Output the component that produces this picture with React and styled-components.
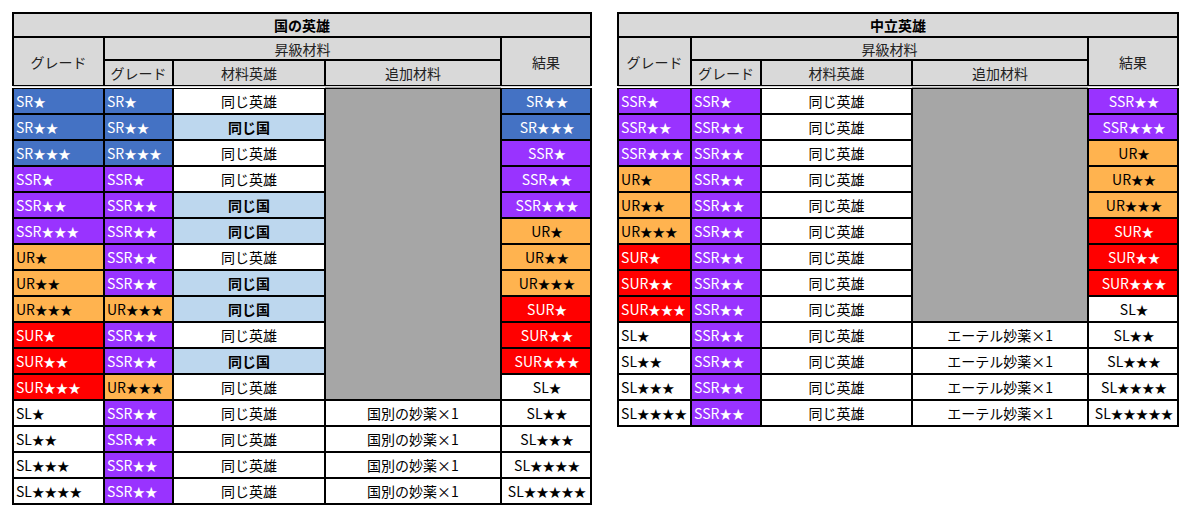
import React from "react";
import styled, { createGlobalStyle } from "styled-components";

const GlobalStyle = createGlobalStyle`
  html, body {
    margin: 0;
    padding: 0;
    background: #fff;
  }
  body {
    font-family: "Noto Sans CJK JP", "Noto Sans", sans-serif;
    font-size: 14px;
    color: #000;
  }
`;

const GRADE_COLORS = {
  SR: { bg: "#4472c4", fg: "#fff" },
  SSR: { bg: "#9933ff", fg: "#fff" },
  UR: { bg: "#ffb34f", fg: "#000" },
  SUR: { bg: "#ff0000", fg: "#fff" },
  SL: { bg: "#fff", fg: "#000" },
};

const gradeOf = (label) => label.replace(/★/g, "");

const Page = styled.div`
  display: flex;
  align-items: flex-start;
  gap: 25px;
  padding: 12px 0 0 12px;
`;

const Sheet = styled.table`
  border-collapse: collapse;
  table-layout: fixed;
  border: 2px solid #000;
  width: ${(p) => p.$width}px;
`;

const TitleCell = styled.th`
  background: #d9d9d9;
  border: 2px solid #000;
  height: 22px;
  padding: 0;
  font-weight: bold;
  font-size: 14px;
  text-align: center;
`;

const HeadCell = styled.th`
  background: #d9d9d9;
  border: 2px solid #000;
  border-bottom: ${(p) => (p.$last ? "4px double #000" : "2px solid #000")};
  height: ${(p) => p.$h}px;
  padding: 0;
  font-weight: normal;
  font-size: 14px;
  color: #222;
  text-align: center;
`;

const GradeCell = styled.td`
  background: ${(p) => GRADE_COLORS[p.$grade].bg};
  color: ${(p) => GRADE_COLORS[p.$grade].fg};
  border: 2px solid #000;
  height: 24px;
  padding: 0 0 0 2px;
  text-align: ${(p) => (p.$center ? "center" : "left")};
  white-space: nowrap;
  overflow: hidden;
`;

const Stars = styled.span`
  font-size: 12.5px;
`;

const MaterialCell = styled.td`
  background: ${(p) => (p.$country ? "#bdd7ee" : "#fff")};
  font-weight: ${(p) => (p.$country ? "bold" : "normal")};
  border: 2px solid #000;
  padding: 0;
  text-align: center;
`;

const ExtraCell = styled.td`
  background: ${(p) => (p.$empty ? "#a6a6a6" : "#fff")};
  border: 2px solid #000;
  padding: 0;
  text-align: center;
  white-space: nowrap;
`;

const Grade = ({ label, center }) => {
  const name = gradeOf(label);
  return (
    <GradeCell $grade={name} $center={center}>
      {name}
      <Stars>{label.slice(name.length)}</Stars>
    </GradeCell>
  );
};

function UpgradeTable({ title, widths, rows, grayRows, extraLabel }) {
  const total = widths.reduce((a, b) => a + b, 0);
  return (
    <Sheet $width={total}>
      <colgroup>
        {widths.map((w, i) => (
          <col key={i} style={{ width: w }} />
        ))}
      </colgroup>
      <thead>
        <tr>
          <TitleCell colSpan={5}>{title}</TitleCell>
        </tr>
        <tr>
          <HeadCell rowSpan={2} $h={21} $last>
            グレード
          </HeadCell>
          <HeadCell colSpan={3} $h={21}>
            昇級材料
          </HeadCell>
          <HeadCell rowSpan={2} $h={21} $last>
            結果
          </HeadCell>
        </tr>
        <tr>
          <HeadCell $h={24} $last>
            グレード
          </HeadCell>
          <HeadCell $h={24} $last>
            材料英雄
          </HeadCell>
          <HeadCell $h={24} $last>
            追加材料
          </HeadCell>
        </tr>
      </thead>
      <tbody>
        {rows.map(([from, material, country, result], i) => (
          <tr key={i}>
            <Grade label={from} />
            <Grade label={material} />
            <MaterialCell $country={country}>
              {country ? "同じ国" : "同じ英雄"}
            </MaterialCell>
            {i === 0 && <ExtraCell $empty rowSpan={grayRows} />}
            {i >= grayRows && <ExtraCell>{extraLabel}</ExtraCell>}
            <Grade label={result} center />
          </tr>
        ))}
      </tbody>
    </Sheet>
  );
}

const countryRows = [
  ["SR★", "SR★", false, "SR★★"],
  ["SR★★", "SR★★", true, "SR★★★"],
  ["SR★★★", "SR★★★", false, "SSR★"],
  ["SSR★", "SSR★", false, "SSR★★"],
  ["SSR★★", "SSR★★", true, "SSR★★★"],
  ["SSR★★★", "SSR★★", true, "UR★"],
  ["UR★", "SSR★★", false, "UR★★"],
  ["UR★★", "SSR★★", true, "UR★★★"],
  ["UR★★★", "UR★★★", true, "SUR★"],
  ["SUR★", "SSR★★", false, "SUR★★"],
  ["SUR★★", "SSR★★", true, "SUR★★★"],
  ["SUR★★★", "UR★★★", false, "SL★"],
  ["SL★", "SSR★★", false, "SL★★"],
  ["SL★★", "SSR★★", false, "SL★★★"],
  ["SL★★★", "SSR★★", false, "SL★★★★"],
  ["SL★★★★", "SSR★★", false, "SL★★★★★"],
];

const neutralRows = [
  ["SSR★", "SSR★", false, "SSR★★"],
  ["SSR★★", "SSR★★", false, "SSR★★★"],
  ["SSR★★★", "SSR★★", false, "UR★"],
  ["UR★", "SSR★★", false, "UR★★"],
  ["UR★★", "SSR★★", false, "UR★★★"],
  ["UR★★★", "SSR★★", false, "SUR★"],
  ["SUR★", "SSR★★", false, "SUR★★"],
  ["SUR★★", "SSR★★", false, "SUR★★★"],
  ["SUR★★★", "SSR★★", false, "SL★"],
  ["SL★", "SSR★★", false, "SL★★"],
  ["SL★★", "SSR★★", false, "SL★★★"],
  ["SL★★★", "SSR★★", false, "SL★★★★"],
  ["SL★★★★", "SSR★★", false, "SL★★★★★"],
];

export default function App() {
  return (
    <>
      <GlobalStyle />
      <Page>
        <UpgradeTable
          title="国の英雄"
          widths={[91, 69, 152, 176, 90]}
          rows={countryRows}
          grayRows={12}
          extraLabel="国別の妙薬×1"
        />
        <UpgradeTable
          title="中立英雄"
          widths={[73, 70, 151, 176, 90]}
          rows={neutralRows}
          grayRows={9}
          extraLabel="エーテル妙薬×1"
        />
      </Page>
    </>
  );
}
